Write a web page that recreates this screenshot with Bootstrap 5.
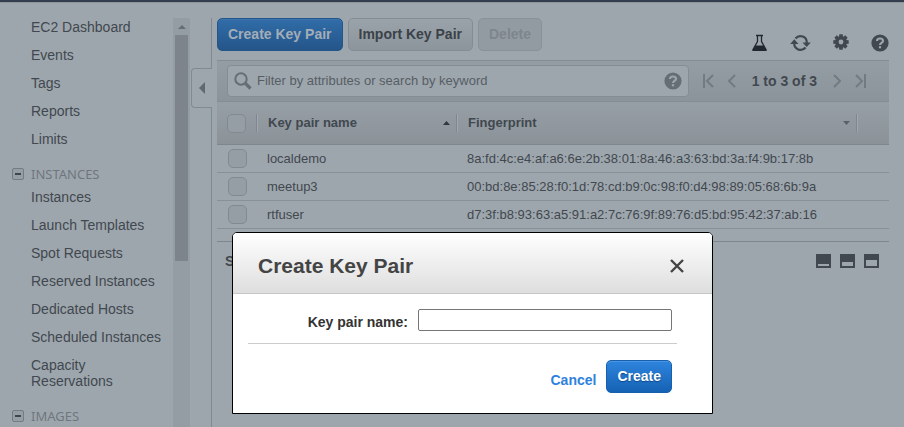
<!DOCTYPE html>
<html lang="en">
<head>
<meta charset="utf-8">
<meta name="viewport" content="width=device-width, initial-scale=1">
<title>Key Pairs</title>
<link href="https://cdn.jsdelivr.net/npm/bootstrap@5.3.0/dist/css/bootstrap.min.css" rel="stylesheet">
<style>
:root{--dim:#9ea6ad;--line:#858d94;--ink:#41484f}
body{background:var(--dim);color:var(--ink);font:14px/16px "Liberation Sans",Arial,sans-serif;height:100vh;overflow:hidden;border-top:2px solid #323e50}
button{font-family:inherit}
.app-shell{height:100%;border-top:1px solid #8c9699}
.side-menu{width:173px;padding-top:10px}
.side-menu a{display:block;color:var(--ink);text-decoration:none;padding:6px 8px 6px 31px}
.side-group{font:13px/16px "Noto Sans",sans-serif;color:#6f777e;padding:13px 0 1px 12px;gap:7px}
.fold{width:12px;height:12px;border:1px solid #747c83;border-radius:2px;background:#969ea5;padding:0;margin-top:2px}
.fold::before{content:"";display:block;width:6px;height:2px;margin:0 auto;background:#3f464d}
.scroll-track{width:17px;margin-top:15px;background:#959da4}
.scroll-track svg{display:block;height:17px;width:17px}
.scroll-thumb{width:13px;height:226px;background:#7d848b}
.splitter{width:27px;padding:15px 5px 0 1px}
.splitter-line{border-right:1px solid #828a91}
.splitter-top{height:50px}
.splitter-tab{height:40px;border:1px solid #828a91;border-right:0;border-radius:4px 0 0 4px;padding:0 7px 0 0;background:none;margin:0}
.content-pane{padding:15px 15px 0 0}
.act-group{gap:5px}
.act{font-size:14px;font-weight:700;line-height:17px;height:33px;padding:0 10px;border:1px solid var(--line);border-radius:5px;white-space:nowrap}
.act-dim-blue{color:#a3adb7;background:linear-gradient(#316da8,#245589);border-color:#24568b;box-shadow:inset 0 1px #3a73ab}
.act-grey{color:#3b4249;background:linear-gradient(#9ba3aa,#8d959c)}
.act-off{color:#7e868d;background:#939ba2;border-color:#8a9299}
.tool-icons{gap:22px;padding-top:16px}
.plain{border:0;background:none;padding:0;display:flex;color:var(--ink)}
.filter-bar{margin-top:8px;height:42px;border-top:1px solid var(--line);border-bottom:1px solid var(--line);background:linear-gradient(#959da4,#8c949b);padding:0 23px 0 10px}
.filter-box{height:32px;border:1px solid #858d94;border-radius:4px;background:var(--dim);padding:0 6px;gap:5px}
.filter-box input{border:0;background:none;font-size:13px;color:#565e65;padding:0;outline:0;min-width:0}
.filter-box input::placeholder{color:#565e65;opacity:1}
.filter-box .plain{color:#666e75}
.pager{padding-left:14px;gap:14px}
.pager .plain{color:#737b82}
.pager-text{font-weight:700;color:var(--ink);white-space:nowrap;padding:0 2px}
.key-table{width:100%;table-layout:fixed;border-collapse:separate;border-spacing:0;font-size:13px}
.key-table th{height:43px;padding:0 11px;border-bottom:1px solid #7f878e;background:linear-gradient(#979fa6,#8b9399)}
.key-table td{height:28px;padding:0 11px;border-bottom:1px solid #899198}
.key-table th:first-child{padding:0 10px}
.w-pick{width:39px}.w-name{width:200px}.w-end{width:33px}
.th-sep{border-left:1px solid #7f878e;box-shadow:inset 1px 0 #a0a8af;height:18px;margin:0 -5px 0 -11px;padding:0 0 0 11px}
.tick{appearance:none;display:block;width:19px;height:19px;margin:0;border:1px solid #828a91;border-radius:5px;background:#969ea5}
.detail-bar{margin-top:12px;border-top:1px solid #7f878e;padding:11px 10px 0 8px;font-weight:700}
.detail-icons{gap:9px}
.dialog-layer{padding:232px 0 0 41px}
.dialog-box{width:481px;border:1px solid #000;border-radius:5px 5px 0 0;background:#fff}
.dialog-head{height:61px;padding:6px 28px 0 25px;border-bottom:1px solid #c6c6c6;border-radius:4px 4px 0 0;background:linear-gradient(#fff,#dedede)}
.dialog-head h1{font-size:21px;line-height:26px;font-weight:700;color:#444;margin:0}
.dialog-head .plain{color:#444}
.dialog-field{margin:0 35px 0 15px;padding:15px 5px 12px 0;border-bottom:1px solid #ccc;gap:10px}
.dialog-field label{font-weight:700;color:#333;padding-top:3px}
.dialog-field input{width:254px;height:22px;border:1px solid #767676;border-radius:2px;padding:1px 4px}
.dialog-foot{padding:16px 40px 20px 0;gap:10px}
.dialog-foot a{font-weight:700;color:#2e82dc;text-decoration:none;padding-top:6px}
.act-blue{color:#fff;background:linear-gradient(#2e84dd,#1562b4);border-color:#1760ae;box-shadow:inset 0 1px #4a95e2;text-shadow:0 1px 1px #0d4a8c}
</style>
</head>
<body>
<div class="app-shell d-flex">
  <nav class="side-menu flex-shrink-0 overflow-hidden" aria-label="EC2">
    <a href="#">EC2 Dashboard</a>
    <a href="#">Events</a>
    <a href="#">Tags</a>
    <a href="#">Reports</a>
    <a href="#">Limits</a>
    <div class="side-group d-flex"><button class="fold" type="button" aria-label="Collapse Instances"></button><span>INSTANCES</span></div>
    <a href="#">Instances</a>
    <a href="#">Launch Templates</a>
    <a href="#">Spot Requests</a>
    <a href="#">Reserved Instances</a>
    <a href="#">Dedicated Hosts</a>
    <a href="#">Scheduled Instances</a>
    <a href="#">Capacity<br>Reservations</a>
    <div class="side-group d-flex"><button class="fold" type="button" aria-label="Collapse Images"></button><span>IMAGES</span></div>
  </nav>
  <div class="scroll-track flex-shrink-0 d-flex flex-column align-items-center">
    <svg viewBox="0 0 17 17" aria-hidden="true"><path d="M5 11l4-4 4 4z" fill="#666e75"/></svg>
    <div class="scroll-thumb"></div>
  </div>
  <div class="splitter flex-shrink-0 d-flex flex-column">
    <div class="splitter-line splitter-top"></div>
    <button class="splitter-tab d-flex align-items-center justify-content-end" type="button" aria-label="Hide menu"><svg width="6" height="12" viewBox="0 0 6 12"><path d="M6 0v12L0 6z" fill="#61696f"/></svg></button>
    <div class="splitter-line flex-grow-1"></div>
  </div>
  <main class="content-pane flex-grow-1">
    <div class="d-flex justify-content-between align-items-start">
      <div class="act-group d-flex">
        <button class="act act-dim-blue" type="button">Create Key Pair</button>
        <button class="act act-grey" type="button">Import Key Pair</button>
        <button class="act act-off" type="button" disabled>Delete</button>
      </div>
      <div class="tool-icons d-flex align-items-center">
        <button class="plain" type="button" aria-label="Experiments"><svg width="17" height="18" viewBox="0 0 17 18"><path d="M5 1.500h7M6.500 2v5.500L2 15.500h13L10.500 7.500V2" fill="none" stroke="#20272e" stroke-width="1.300"/><path d="M4.500 11.500h8L15.800 17H1.200z" fill="#20272e"/></svg></button>
        <button class="plain" type="button" aria-label="Refresh"><svg width="21" height="18" viewBox="0 0 21 18"><g fill="none" stroke="#41484f" stroke-width="2.200"><path d="M5.500 4.500A6.300 6.300 0 0 1 16.700 9"/><path d="M15.500 13.500A6.300 6.300 0 0 1 4.300 9"/></g><path d="M12.500 8.500h8.300L16.700 13zM.2 10h8.300L4.300 5.300z" fill="#41484f"/></svg></button>
        <button class="plain" type="button" aria-label="Settings"><svg width="16" height="18" viewBox="0 0 16 18"><g fill="#41484f"><circle cx="8" cy="8" r="5.800"/><g id="teeth"><path d="M6.300 .3h3.400l.4 3H5.900zM6.300 15.700h3.400l.4-3H5.900z"/><path d="M.3 6.300v3.400l3 .4V5.900zM15.700 6.300v3.400l-3 .4V5.900z"/></g><use href="#teeth" transform="rotate(45 8 8)"/></g><circle cx="8" cy="8" r="2.400" fill="#9ea6ad"/></svg></button>
        <button class="plain" type="button" aria-label="Help"><svg width="18" height="18" viewBox="0 0 18 18"><circle cx="9" cy="9" r="8.600" fill="currentColor"/><path d="M6 6.900C6 3.600 12 3.600 12 6.900c0 2-3 2-3 4" fill="none" stroke="#9ea6ad" stroke-width="2.100"/><path d="M7.900 12.200h2.200v2.100H7.900z" fill="#9ea6ad"/></svg></button>
      </div>
    </div>
    <div class="filter-bar d-flex align-items-center">
      <div class="filter-box d-flex align-items-center flex-grow-1">
        <svg width="18" height="18" viewBox="0 0 18 18" aria-hidden="true"><circle cx="7" cy="7" r="5.700" fill="none" stroke="#666e75" stroke-width="2"/><path d="M11 11l5.500 5.500" stroke="#666e75" stroke-width="3.200"/></svg>
        <input class="flex-grow-1" type="text" aria-label="Filter" placeholder="Filter by attributes or search by keyword">
        <button class="plain" type="button" aria-label="Filter help"><svg width="18" height="18" viewBox="0 0 18 18"><circle cx="9" cy="9" r="8.600" fill="currentColor"/><path d="M6 6.900C6 3.600 12 3.600 12 6.900c0 2-3 2-3 4" fill="none" stroke="#9ea6ad" stroke-width="2.100"/><path d="M7.900 12.200h2.200v2.100H7.900z" fill="#9ea6ad"/></svg></button>
      </div>
      <div class="pager d-flex align-items-center flex-shrink-0">
        <button class="plain" type="button" aria-label="First page"><svg width="11" height="14" viewBox="0 0 11 14" fill="none" stroke="currentColor" stroke-width="2"><path d="M1 0v14M10 1L4 7l6 6"/></svg></button>
        <button class="plain" type="button" aria-label="Previous page"><svg width="8" height="14" viewBox="0 0 8 14" fill="none" stroke="currentColor" stroke-width="2"><path d="M7 1L1 7l6 6"/></svg></button>
        <span class="pager-text">1 to 3 of 3</span>
        <button class="plain" type="button" aria-label="Next page"><svg width="8" height="14" viewBox="0 0 8 14" fill="none" stroke="currentColor" stroke-width="2"><path d="M1 1l6 6-6 6"/></svg></button>
        <button class="plain" type="button" aria-label="Last page"><svg width="11" height="14" viewBox="0 0 11 14" fill="none" stroke="currentColor" stroke-width="2"><path d="M10 0v14M1 1l6 6-6 6"/></svg></button>
      </div>
    </div>
    <table class="key-table">
      <colgroup><col class="w-pick"><col class="w-name"><col><col class="w-end"></colgroup>
      <thead><tr>
        <th scope="col"><input class="tick" type="checkbox" aria-label="Select all"></th>
        <th scope="col"><div class="th-sep d-flex align-items-center justify-content-between"><span>Key pair name</span><svg width="7" height="4" viewBox="0 0 7 4"><path d="M0 4l3.500-4L7 4z" fill="#30373e"/></svg></div></th>
        <th scope="col"><div class="th-sep d-flex align-items-center justify-content-between"><span>Fingerprint</span><svg width="7" height="4" viewBox="0 0 7 4"><path d="M0 0l3.500 4L7 0z" fill="#5a6269"/></svg></div></th>
        <th scope="col"><div class="th-sep"></div></th>
      </tr></thead>
      <tbody>
        <tr><td><input class="tick" type="checkbox" aria-label="Select localdemo"></td><td>localdemo</td><td>8a:fd:4c:e4:af:a6:6e:2b:38:01:8a:46:a3:63:bd:3a:f4:9b:17:8b</td><td></td></tr>
        <tr><td><input class="tick" type="checkbox" aria-label="Select meetup3"></td><td>meetup3</td><td>00:bd:8e:85:28:f0:1d:78:cd:b9:0c:98:f0:d4:98:89:05:68:6b:9a</td><td></td></tr>
        <tr><td><input class="tick" type="checkbox" aria-label="Select rtfuser"></td><td>rtfuser</td><td>d7:3f:b8:93:63:a5:91:a2:7c:76:9f:89:76:d5:bd:95:42:37:ab:16</td><td></td></tr>
      </tbody>
    </table>
    <div class="detail-bar d-flex justify-content-between align-items-center">
      <span>S</span>
      <div class="detail-icons d-flex">
        <button class="plain" type="button" aria-label="Small panel"><svg width="15" height="14" viewBox="0 0 15 14"><path fill-rule="evenodd" d="M0 0h15v14H0zM2 10v2h11v-2z" fill="currentColor"/></svg></button>
        <button class="plain" type="button" aria-label="Medium panel"><svg width="15" height="14" viewBox="0 0 15 14"><path fill-rule="evenodd" d="M0 0h15v14H0zM2 8v4h11V8z" fill="currentColor"/></svg></button>
        <button class="plain" type="button" aria-label="Large panel"><svg width="15" height="14" viewBox="0 0 15 14"><path fill-rule="evenodd" d="M0 0h15v14H0zM2 6v6h11V6z" fill="currentColor"/></svg></button>
      </div>
    </div>
  </main>
</div>
<div class="modal d-block dialog-layer" role="dialog" aria-modal="true" aria-labelledby="dlg-title">
  <form class="dialog-box mx-auto">
    <div class="dialog-head d-flex align-items-center justify-content-between">
      <h1 id="dlg-title">Create Key Pair</h1>
      <button class="plain" type="button" aria-label="Close"><svg width="14" height="14" viewBox="0 0 14 14"><path d="M1 1l12 12M13 1L1 13" stroke="currentColor" stroke-width="2.400"/></svg></button>
    </div>
    <div class="dialog-field d-flex justify-content-end align-items-center">
      <label for="key-name">Key pair name:</label>
      <input id="key-name" type="text">
    </div>
    <div class="dialog-foot d-flex justify-content-end align-items-center">
      <a href="#">Cancel</a>
      <button class="act act-blue" type="button">Create</button>
    </div>
  </form>
</div>
<script src="https://cdn.jsdelivr.net/npm/bootstrap@5.3.0/dist/js/bootstrap.bundle.min.js"></script>
</body>
</html>
